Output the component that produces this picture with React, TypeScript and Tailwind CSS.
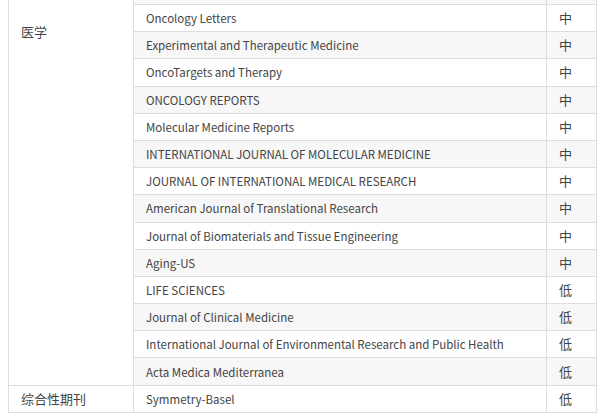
import React from 'react';

const medRows = [
  { name: 'Oncology Letters', level: '中' },
  { name: 'Experimental and Therapeutic Medicine', level: '中' },
  { name: 'OncoTargets and Therapy', level: '中' },
  { name: 'ONCOLOGY REPORTS', level: '中' },
  { name: 'Molecular Medicine Reports', level: '中' },
  { name: 'INTERNATIONAL JOURNAL OF MOLECULAR MEDICINE', level: '中' },
  { name: 'JOURNAL OF INTERNATIONAL MEDICAL RESEARCH', level: '中' },
  { name: 'American Journal of Translational Research', level: '中' },
  { name: 'Journal of Biomaterials and Tissue Engineering', level: '中' },
  { name: 'Aging-US', level: '中' },
  { name: 'LIFE SCIENCES', level: '低' },
  { name: 'Journal of Clinical Medicine', level: '低' },
  { name: 'International Journal of Environmental Research and Public Health', level: '低' },
  { name: 'Acta Medica Mediterranea', level: '低' },
];

const cell = 'border border-[#dddddd] px-3 py-0 align-middle';
const nameCell = `${cell} text-[11.5px] whitespace-nowrap`;

const App = () => {
  return (
    <div
      className="w-[606px] h-[416px] overflow-hidden bg-white text-[13px] leading-[18px] text-[#444444]"
      style={{ fontFamily: '"Noto Sans CJK SC", "Noto Sans", sans-serif' }}
    >
      <table className="ml-2 -mt-[23.2px] w-[588px] border-collapse table-fixed">
        <colgroup>
          <col className="w-[125px]" />
          <col className="w-[413px]" />
          <col className="w-[50px]" />
        </colgroup>
        <tbody>
          <tr className="h-[27.2px]">
            <td className={`${cell} align-top pt-[45px]`} rowSpan={15}>
              医学
            </td>
            <td className={`${nameCell} bg-[#f7f7f7]`}></td>
            <td className={`${cell} bg-[#f7f7f7]`}></td>
          </tr>
          {medRows.map((row, i) => (
            <tr key={row.name} className="h-[27.2px]">
              <td className={`${nameCell} ${i % 2 === 1 ? 'bg-[#f7f7f7]' : ''}`}>{row.name}</td>
              <td className={`${cell} ${i % 2 === 1 ? 'bg-[#f7f7f7]' : ''}`}>{row.level}</td>
            </tr>
          ))}
          <tr className="h-[27.2px]">
            <td className={cell}>综合性期刊</td>
            <td className={nameCell}>Symmetry-Basel</td>
            <td className={cell}>低</td>
          </tr>
        </tbody>
      </table>
    </div>
  );
};

export default App;
